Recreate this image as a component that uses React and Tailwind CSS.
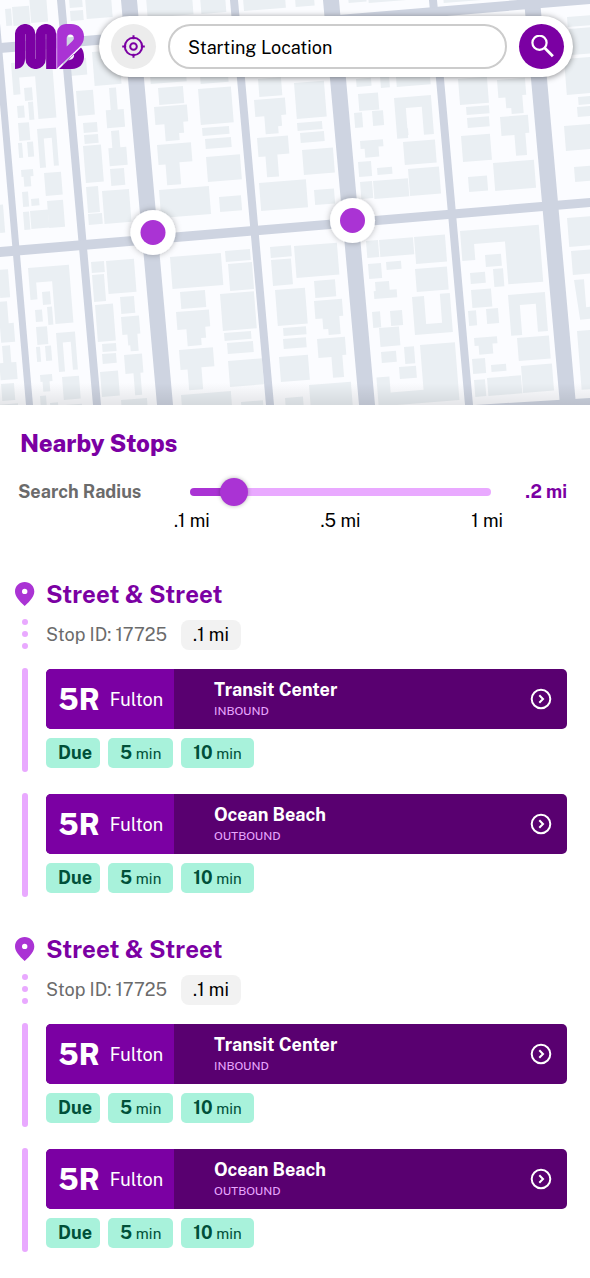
import { useState } from "react";

// City blocks: [x, y, outline drawn from that corner in the street grid's own axes]
const box = (w, h) => `h${w}v${h}h${-w}z`;
const COURT = "h41v58h-18v-43h-16v17h-7z";
const HORSESHOE = "h19v38h-5v-28h-8v29h-6z";
const STUB = "h12v7h-3v10h-7v-10h-2z";
const STEPS = "h33v17h-5v11h-5v7h-14v-17h-9z";
const TEE = "h34v19h-13v22h-14v-21h-7z";
const SMALL_TEE = "h28v18h-4v22h-11v-21h-13z";
const SMALL_STEPS = "h28v17h-4v18h-12v-6h-5v-11h-7z";
const ARCH = "h37v39h-10v-28h-16v30h-11z";

const BUILDINGS = [
  [-2, 205, box(5, 28)], [-2, 270, box(10, 28)], [-2, 302, "h9v22h5v19h-14z"],
  [2, 346, "h8v17h5v17h-17v-17h4z"], [1, 384, box(13, 17)], [-4, 405, box(22, 8)],

  [5, 9, box(6, 17)], [12, 7, box(17, 19)], [29, -5, box(17, 28)],
  [11, 63, COURT], [24, 88, box(8, 13)], [17, 106, box(7, 12)], [28, 102, box(5, 18)],
  [18, 123, box(11, 18)], [18, 143, box(4, 15)], [27, 142, box(6, 15)], [37, 129, HORSESHOE],
  [21, 170, STUB], [44, 173, box(17, 23)], [22, 192, box(6, 15)], [31, 199, box(8, 7)],
  [23, 212, box(6, 18)], [30, 211, box(18, 18)], [47, 201, box(16, 27)],
  [28, 268, COURT], [42, 292, box(8, 13)], [35, 310, box(7, 12)], [47, 307, box(5, 18)],
  [36, 327, box(11, 18)], [36, 347, box(4, 15)], [45, 346, box(6, 15)], [56, 333, HORSESHOE],
  [40, 375, STUB], [62, 377, box(17, 23)], [40, 396, box(6, 15)], [50, 403, box(8, 7)], [65, 405, box(17, 9)],

  [69, -2, box(13, 10)], [70, 11, box(13, 10)], [85, -3, box(26, 22)],
  [69, 59, box(17, 17)], [92, 52, box(27, 34)], [76, 91, box(17, 25)],
  [109, 88, "h7v22h6v18h-18v-18h5z"], [83, 123, box(14, 10)], [84, 135, box(14, 9)],
  [83, 146, box(18, 37)], [111, 131, "h8v17h6v18h-18v-18h4z"], [110, 169, box(14, 17)],
  [86, 187, box(12, 26)], [102, 191, box(27, 33)], [88, 214, box(14, 11)],
  [91, 262, box(13, 11)], [106, 261, box(28, 33)], [92, 275, box(12, 27)], [95, 305, box(18, 37)],
  [120, 297, box(14, 17)], [121, 317, "h18v18h-3v17h-8v-6h-2v-11h-5z"], [102, 344, box(14, 8)],
  [102, 354, box(14, 10)], [124, 355, "h18v19h-3v22h-7v-22h-8z"], [100, 372, box(18, 25)], [121, 400, box(26, 10)],

  [146, -3, box(46, 21)], [200, -4, box(25, 18)], [150, 74, box(36, 10)], [158, 88, box(25, 17)],
  [154, 107, STEPS], [200, 75, box(28, 9)], [198, 89, box(33, 36)], [202, 128, box(27, 8)],
  [205, 139, box(26, 10)], [157, 145, TEE], [206, 157, box(34, 25)], [159, 190, box(50, 28)], [219, 197, box(22, 15)],
  [170, 257, box(51, 32)], [225, 251, box(25, 11)], [228, 264, box(24, 27)], [180, 292, box(25, 17)],
  [176, 312, STEPS], [220, 294, box(34, 37)], [224, 333, box(27, 8)], [227, 343, box(26, 11)],
  [179, 350, TEE], [228, 361, box(34, 26)], [181, 395, box(50, 14)], [241, 402, box(22, 8)],

  [243, -2, box(42, 13)], [295, -2, box(19, 9)], [258, 79, box(23, 18)], [254, 100, "h31v17h-5v11h-4v7h-13v-18h-9z"],
  [294, 83, box(30, 36)], [297, 123, box(25, 8)], [300, 133, box(24, 10)], [257, 138, "h31v18h-12v22h-12v-21h-7z"],
  [302, 150, box(31, 25)], [259, 183, box(47, 28)], [314, 190, box(20, 15)],
  [270, 247, box(21, 11)], [271, 260, box(20, 26)], [294, 246, box(43, 32)], [275, 290, box(30, 36)],
  [314, 281, box(21, 17)], [314, 301, SMALL_STEPS], [283, 328, box(23, 8)], [283, 339, box(23, 10)],
  [317, 339, SMALL_TEE], [279, 357, box(29, 25)], [309, 385, box(42, 24)], [285, 398, box(18, 10)],

  [348, -5, box(18, 8)], [368, -6, box(50, 9)], [356, 79, box(15, 8)], [380, 76, box(9, 12)], [396, 77, box(34, 10)],
  [358, 94, box(20, 17)], [394, 98, ARCH], [354, 113, box(8, 15)], [372, 111, box(11, 15)],
  [397, 129, box(11, 7)], [360, 141, "h23v7h-5v10h-14v-9h-4z"], [403, 142, box(32, 23)],
  [358, 162, box(13, 15)], [377, 168, box(15, 7)], [360, 182, box(12, 17)], [373, 181, box(35, 18)], [408, 169, box(31, 27)],
  [366, 241, box(12, 17)], [379, 240, box(34, 17)], [414, 237, box(31, 27)], [368, 264, box(13, 15)],
  [386, 262, box(15, 8)], [415, 269, box(32, 23)], [375, 282, "h14v9h7v8h-23v-8h2z"],
  [412, 297, "h12v28h16v-29h10v39h-38z"], [372, 312, box(8, 16)], [390, 311, box(12, 15)],
  [379, 328, box(20, 19)], [381, 352, box(15, 11)], [404, 347, box(10, 17)], [399, 367, box(17, 12)],
  [420, 345, "h35v58h-81v-29h13v16h33z"],

  [443, -6, box(70, 9)], [458, 79, box(29, 26)], [497, 80, SMALL_STEPS], [466, 107, box(23, 8)], [467, 118, box(22, 10)],
  [500, 117, SMALL_TEE], [461, 136, box(29, 26)], [468, 177, box(19, 15)], [493, 163, box(41, 28)],
  [460, 231, "h79v57h-35v-43h-31v16h-13z"], [485, 255, box(16, 12)], [470, 273, box(15, 11)],
  [493, 269, box(10, 18)], [471, 290, box(20, 18)], [468, 311, box(8, 15)], [486, 309, box(12, 15)],
  [508, 295, ARCH], [474, 338, "h23v7h-5v10h-14v-9h-4z"], [517, 338, box(32, 23)], [472, 359, box(13, 15)],
  [491, 365, box(15, 7)], [474, 380, box(11, 17)], [487, 378, box(34, 18)], [521, 366, box(31, 27)],

  [567, 17, box(25, 10)], [569, 29, box(25, 26)], [564, 59, box(30, 36)], [578, 97, box(14, 8)], [577, 107, box(14, 10)],
  [564, 126, box(30, 25)], [574, 167, box(18, 15)], [567, 218, box(26, 29)], [571, 251, box(22, 24)],
  [574, 280, "h10v28h12v12h-19z"], [577, 331, box(16, 59)],
];

// Avenues: [left x at top, left x at bottom, width at top, width at bottom]
const AVENUES = [
  [-9, 26, 7, 7], [57, 93, 8, 8], [121, 157, 16, 16], [230, 266, 8, 8],
  [323, 359, 16, 16], [429, 465, 8, 8], [524, 560, 16, 16],
];

const STOPS_ON_MAP = [[153, 232.5], [352.5, 220.5]];

function StreetMap() {
  return (
    <svg viewBox="0 0 590 405" preserveAspectRatio="xMidYMid slice" className="block w-full" role="img" aria-label="Map of nearby stops">
      <defs>
        <linearGradient id="map-fade" x1="0" y1="0" x2="0" y2="1">
          <stop offset="0" stopColor="#000" stopOpacity="0" />
          <stop offset="1" stopColor="#000" stopOpacity="0.09" />
        </linearGradient>
        <filter id="marker-shadow" x="-30%" y="-30%" width="160%" height="160%">
          <feDropShadow dx="0" dy="0" stdDeviation="3" floodColor="#000" floodOpacity="0.3" />
        </filter>
      </defs>
      <rect width="590" height="405" fill="#fbfcff" />
      <g fill="#eaeff3">
        {BUILDINGS.map(([x, y, outline]) => (
          <path key={`${x},${y}`} d={`M${x} ${y}${outline}`} transform={`rotate(-4.5 ${x} ${y})`} />
        ))}
      </g>
      <g fill="#ced4e1">
        {AVENUES.map(([top, bottom, wTop, wBottom]) => (
          <path key={top} d={`M${top} 0H${top + wTop}L${bottom + wBottom} 405H${bottom}z`} />
        ))}
        <path d="M0 43L590 -6V4L0 53z" />
        <path d="M0 247L590 198V207L0 257z" />
        <path d="M475 405L590 398V405z" />
      </g>
      <rect y="383" width="590" height="22" fill="url(#map-fade)" />
      {STOPS_ON_MAP.map(([x, y]) => (
        <g key={x}>
          <circle cx={x} cy={y} r="22.5" fill="#fff" filter="url(#marker-shadow)" />
          <circle cx={x} cy={y} r="12.5" fill="#aa33d4" />
        </g>
      ))}
    </svg>
  );
}

function Logo() {
  return (
    <svg viewBox="15 24 69 45" className="h-[45px] w-[69px] shrink-0" role="img" aria-label="MB">
      <path
        d="M20 58V34.200a5.200 5.200 0 0 1 10.400 0V58.800a5.200 5.200 0 0 0 10.400 0V34.200a5.200 5.200 0 0 1 10.400 0V69"
        fill="none" stroke="#7b00a3" strokeWidth="10.100"
      />
      <path d="M15 56h10v3c0 6-4 10-10 10z" fill="#7b00a3" />
      <path fillRule="evenodd" fill="#7b00a3" d="M59 69L81 47.500C83.200 50 84 53 84 57c0 7-5 12-12 12zM67.500 60.300c4.500 0 7.500-3 6.300-6.300z" />
      <path
        fillRule="evenodd" fill="#aa33d4"
        d="M57 68.500V33c0-5 4-9 9-9h5c8 0 13 5.500 13 12.500 0 5-2 8-5 11zM66.700 46.500l5.500-5.200c1-1 1.700-2 1.700-3.300 0-2-1.600-3.600-3.600-3.600s-3.600 1.600-3.600 3.600z"
      />
      <path d="M56.300 34v35l1.200-1V31z" fill="#c06fe0" />
    </svg>
  );
}

function SearchBar() {
  return (
    <form
      role="search"
      onSubmit={(e) => e.preventDefault()}
      className="flex min-w-0 flex-1 items-center gap-3 rounded-full bg-white py-2 pr-[9px] pl-3 shadow-[0_1px_6px_rgba(0,0,0,0.45)]"
    >
      <button type="button" aria-label="Use my location" className="flex size-[45px] shrink-0 items-center justify-center rounded-full bg-[#ececec]">
        <svg viewBox="0 0 24 24" className="size-6" fill="none" stroke="#7b00a3" strokeWidth="2">
          <circle cx="11.500" cy="11.500" r="8.700" />
          <circle cx="11.500" cy="11.500" r="3.300" />
          <path d="M11.500.2v4M11.500 18.800v4M.2 11.500h4M18.800 11.500h4" />
        </svg>
      </button>
      <input
        type="text"
        aria-label="Starting location"
        defaultValue="Starting Location"
        className="h-[45px] min-w-0 flex-1 rounded-full border-2 border-[#cccccc] bg-white px-[18px] pt-[2px] text-lg text-black outline-none"
      />
      <button type="submit" aria-label="Search" className="flex size-[45px] shrink-0 items-center justify-center rounded-full bg-[#7b00a3]">
        <svg viewBox="0 0 24 24" className="size-6" fill="none" stroke="#fff" strokeWidth="2.200">
          <circle cx="9.500" cy="7.800" r="7.100" />
          <path d="M14.500 12.800l8.400 8.400" strokeWidth="2.800" />
        </svg>
      </button>
    </form>
  );
}

function RadiusSlider() {
  const [radius, setRadius] = useState(0.2);
  const share = (radius - 0.1) / 0.9;
  const filled = `calc(14px + (100% - 28px) * ${share})`;
  return (
    <div className="mt-[22px] grid grid-cols-[172px_1fr_76px] items-center pl-[18px]">
      <label htmlFor="radius" className="text-lg leading-[30px] font-bold text-[#6b6b6b]">Search Radius</label>
      <input
        id="radius"
        type="range"
        min="0.1"
        max="1"
        step="0.1"
        value={radius}
        onChange={(e) => setRadius(Number(e.target.value))}
        style={{ backgroundImage: `linear-gradient(to right, #aa33d4 ${filled}, #e9a9ff ${filled})` }}
        className="h-2 w-full appearance-none rounded-full [&::-webkit-slider-thumb]:size-7 [&::-webkit-slider-thumb]:appearance-none [&::-webkit-slider-thumb]:rounded-full [&::-webkit-slider-thumb]:bg-[#aa33d4] [&::-webkit-slider-thumb]:shadow-[0_0_4px_rgba(0,0,0,0.3)]"
      />
      <output htmlFor="radius" className="text-right text-lg leading-[30px] font-bold text-[#7b00a3]">
        {radius === 1 ? "1" : String(radius).slice(1)} mi
      </output>
      <div className="col-start-2 mt-1 -mr-3 -ml-4 flex justify-between text-lg leading-5 text-black">
        <span>.1 mi</span>
        <span>.5 mi</span>
        <span>1 mi</span>
      </div>
    </div>
  );
}

function Arrival({ time }) {
  return (
    <li className="h-[30px] rounded-[5px] bg-[#a8f2db] pr-2 pl-3 text-[15px] leading-8 text-[#005039] [&:nth-child(n+2)]:pr-3">
      <span className="text-lg leading-[30px] font-bold">{time}</span>
      {time !== "Due" && " min"}
    </li>
  );
}

function Route({ route }) {
  return (
    <li className="flex gap-[11px]">
      <div className="flex w-5 shrink-0 justify-center">
        <span className="w-[6px] rounded-full bg-[#e9a9ff]" />
      </div>
      <div className="min-w-0 flex-1 pt-px pb-[4px]">
        <a href="#route" className="flex h-[60px] items-center overflow-hidden rounded-[5px] bg-[#590070] pr-[15px] text-white">
          <span className="flex h-full w-32 shrink-0 items-center gap-[10px] bg-[#7b00a3] pl-3">
            <span className="text-3xl font-extrabold">{route.line}</span>
            <span className="pt-[2px] text-lg">{route.name}</span>
          </span>
          <span className="flex flex-1 flex-col pl-10">
            <span className="text-lg leading-6 font-bold">{route.destination}</span>
            <span className="text-xs leading-[18px] text-[#e9a9ff]">{route.direction}</span>
          </span>
          <svg viewBox="0 0 22 22" className="size-[22px] shrink-0" fill="none" stroke="#fff" strokeWidth="2">
            <circle cx="11" cy="11" r="9.300" />
            <path d="M9.300 7.300L13 11l-3.700 3.700" />
          </svg>
        </a>
        <ul className="mt-[9px] flex gap-2">
          {route.arrivals.map((time) => (
            <Arrival key={time} time={time} />
          ))}
        </ul>
      </div>
    </li>
  );
}

function Stop({ stop }) {
  return (
    <section>
      <div className="flex items-center gap-[11px]">
        <svg viewBox="0 0 20 24" className="h-6 w-5 shrink-0" fill="#aa33d4">
          <path fillRule="evenodd" d="M9.700 0C15 0 19.300 4.100 19.300 9.400 19.300 14 15.500 18.500 9.700 24 3.900 18.500 0 14 0 9.400 0 4.100 4.400 0 9.700 0zM9.700 6.700a2.700 2.700 0 1 0 0 5.400 2.700 2.700 0 0 0 0-5.400z" />
        </svg>
        <h2 className="text-2xl leading-6 font-bold text-[#7b00a3]">{stop.name}</h2>
      </div>
      <div className="mt-[13px] flex gap-[11px]">
        <div className="flex w-5 shrink-0 flex-col items-center gap-[6px]">
          <span className="size-[6px] rounded-full bg-[#e9a9ff]" />
          <span className="size-[6px] rounded-full bg-[#e9a9ff]" />
          <span className="size-[6px] rounded-full bg-[#e9a9ff]" />
        </div>
        <p className="flex h-[31px] items-center gap-[14px] text-lg text-[#6b6b6b]">
          Stop ID: {stop.id}
          <span className="h-[30px] rounded-lg bg-[#f2f2f2] px-3 leading-[30px] text-black">{stop.distance}</span>
        </p>
      </div>
      <ul className="mt-[18px] flex flex-col gap-[21px]">
        {stop.routes.map((route) => (
          <Route key={route.destination} route={route} />
        ))}
      </ul>
    </section>
  );
}

const ROUTES = [
  { line: "5R", name: "Fulton", destination: "Transit Center", direction: "INBOUND", arrivals: ["Due", "5", "10"] },
  { line: "5R", name: "Fulton", destination: "Ocean Beach", direction: "OUTBOUND", arrivals: ["Due", "5", "10"] },
];

const STOPS = [
  { key: "a", name: "Street & Street", id: "17725", distance: ".1 mi", routes: ROUTES },
  { key: "b", name: "Street & Street", id: "17725", distance: ".1 mi", routes: ROUTES },
];

export default function App() {
  return (
    <div className="min-h-screen bg-white font-['Public_Sans','Inter',sans-serif]">
      <header className="relative">
        <StreetMap />
        <div className="absolute inset-x-0 top-4 flex items-center gap-[15px] pr-[17px] pl-[15px]">
          <Logo />
          <SearchBar />
        </div>
      </header>
      <main className="pt-[26px] pb-7">
        <div className="pr-[23px]">
          <h1 className="pl-5 text-2xl leading-6 font-extrabold text-[#7b00a3]">Nearby Stops</h1>
          <RadiusSlider />
        </div>
        <div className="mt-[51px] flex flex-col gap-10 pr-[23px] pl-[15px]">
          {STOPS.map((stop) => (
            <Stop key={stop.key} stop={stop} />
          ))}
        </div>
      </main>
    </div>
  );
}
